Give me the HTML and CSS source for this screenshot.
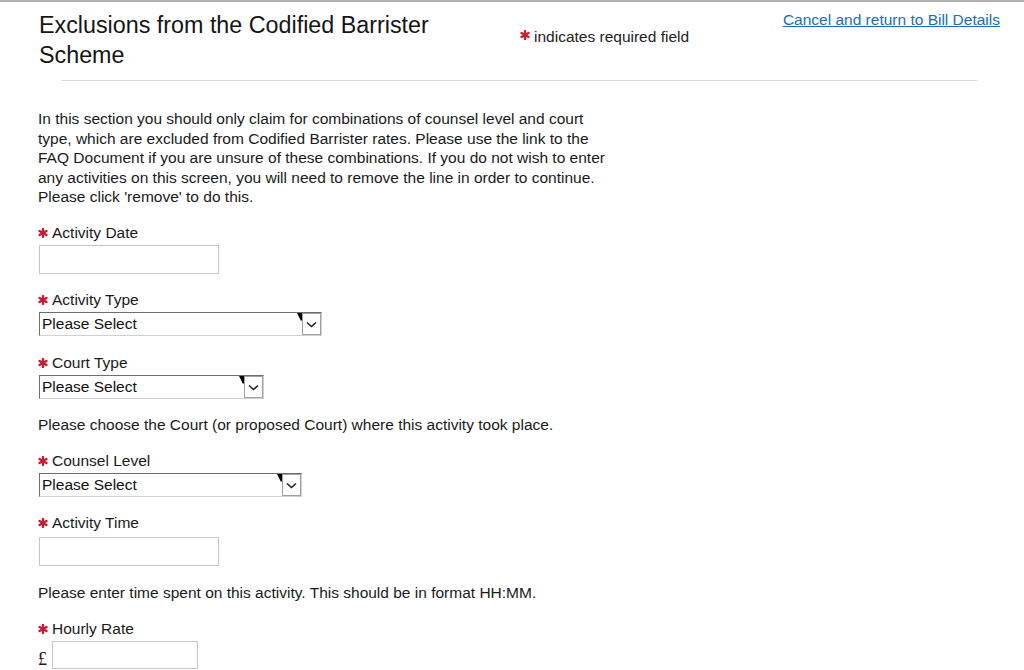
FILE: index.html
```html
<!DOCTYPE html>
<html>
  <head>
    <title>Exclusions from the Codified Barrister Scheme</title>
    <link rel="stylesheet" href="styles.css">
  </head>
  <body>
    <!-- shared icons -->
    <svg class="icon-defs" aria-hidden="true">
      <symbol id="star" viewBox="0 0 10 10">
        <g stroke="currentColor" stroke-width="2.4" stroke-linecap="round">
          <line x1="5" y1="1" x2="5" y2="9"/>
          <line x1="1.5" y1="3" x2="8.5" y2="7"/>
          <line x1="1.5" y1="7" x2="8.5" y2="3"/>
        </g>
      </symbol>
      <symbol id="drop" viewBox="0 0 24 22">
        <polygon points="0,0 5,0 5,7 4,8" fill="#000"/>
        <rect x="5.5" y="0.5" width="18" height="21" fill="#fff" stroke="#a0a0a0"/>
        <polyline points="10,9.5 14.5,13.5 19,9.5" fill="none" stroke="#222" stroke-width="1.6"/>
      </symbol>
    </svg>

    <div class="page">
      <!-- header -->
      <header class="page-head">
        <h1 class="page-title">Exclusions from the Codified Barrister Scheme</h1>
        <p class="req-note"><svg class="req"><use href="#star"/></svg>indicates required field</p>
        <a class="cancel-link" href="#">Cancel and return to Bill Details</a>
      </header>
      <div class="divider"></div>

      <main class="form-body">
        <p class="intro">In this section you should only claim for combinations of counsel level and court type, which are excluded from Codified Barrister rates. Please use the link to the FAQ Document if you are unsure of these combinations. If you do not wish to enter any activities on this screen, you will need to remove the line in order to continue. Please click 'remove' to do this.</p>

        <form class="claim-form">
          <div class="field">
            <label class="field-label"><svg class="req"><use href="#star"/></svg>Activity Date</label>
            <input class="text-input" type="text">
          </div>

          <div class="field">
            <label class="field-label"><svg class="req"><use href="#star"/></svg>Activity Type</label>
            <div class="select-box select-wide">
              <select class="select-input"><option>Please Select</option></select>
              <svg class="select-btn"><use href="#drop"/></svg>
            </div>
          </div>

          <div class="field">
            <label class="field-label"><svg class="req"><use href="#star"/></svg>Court Type</label>
            <div class="select-box select-narrow">
              <select class="select-input"><option>Please Select</option></select>
              <svg class="select-btn"><use href="#drop"/></svg>
            </div>
          </div>

          <p class="help">Please choose the Court (or proposed Court) where this activity took place.</p>

          <div class="field">
            <label class="field-label"><svg class="req"><use href="#star"/></svg>Counsel Level</label>
            <div class="select-box select-mid">
              <select class="select-input"><option>Please Select</option></select>
              <svg class="select-btn"><use href="#drop"/></svg>
            </div>
          </div>

          <div class="field">
            <label class="field-label"><svg class="req"><use href="#star"/></svg>Activity Time</label>
            <input class="text-input time-input" type="text">
          </div>

          <p class="help">Please enter time spent on this activity. This should be in format HH:MM.</p>

          <div class="field">
            <label class="field-label"><svg class="req"><use href="#star"/></svg>Hourly Rate</label>
            <div class="money">
              <span class="currency">£</span>
              <input class="text-input rate-input" type="text">
            </div>
          </div>
        </form>
      </main>
    </div>
  </body>
</html>
```

FILE: styles.css
```css
/* page basics */
body {
  margin: 0;
  font-family: "Liberation Sans", Arial, sans-serif;
  font-size: 15.5px;
  color: #1a1a1a;
  background: #fff;
}

.icon-defs {
  display: none;
}

.page {
  border-top: 2px solid #b0b0b0;
}

/* header */
.page-head {
  display: flex;
  align-items: flex-start;
  padding: 8px 24px 0 39px;
}

.page-title {
  width: 430px;
  margin: 0;
  font-size: 23.3px;
  font-weight: normal;
  line-height: 30px;
  color: #151515;
}

.req-note {
  margin: 18px 0 0 51px;
  line-height: 18px;
  color: #222;
}

.cancel-link {
  margin: 1px 0 0 auto;
  line-height: 18px;
  color: #1b6dba;
}

.req {
  width: 10px;
  height: 10px;
  margin-right: 5px;
  color: #c61d32;
}

.req-note .req {
  margin-right: 4px;
  vertical-align: 2px;
}

.divider {
  margin: 10px 47px 0 61px;
  border-top: 1px solid #d6dada;
}

/* form area */
.form-body {
  padding: 28px 0 0 38px;
}

.intro {
  width: 576px;
  margin: 0 0 17px;
  line-height: 19.5px;
}

.claim-form {
  display: flex;
  flex-direction: column;
  align-items: flex-start;
  gap: 17.6px;
}

.field {
  display: flex;
  flex-direction: column;
  align-items: flex-start;
}

.field-label {
  display: flex;
  align-items: center;
  line-height: 18px;
  margin-bottom: 3px;
}

.field-label .req {
  margin-right: 4px;
}

.help {
  margin: 0;
  line-height: 18px;
}

.text-input {
  box-sizing: border-box;
  width: 180px;
  height: 29px;
  margin-left: 1px;
  border: 1px solid #c6c6c6;
  font: inherit;
}

.time-input {
  margin-top: 2px;
}

/* old style drop down */
.select-box {
  box-sizing: border-box;
  display: flex;
  height: 24px;
  margin-left: 1px;
  border-top: 1px solid #6e6e6e;
  border-left: 1px solid #6e6e6e;
  border-right: 1px solid #d0d0d0;
  border-bottom: 1px solid #d0d0d0;
  background: #fff;
}

.select-wide {
  width: 283px;
}

.select-narrow {
  width: 225px;
}

.select-mid {
  width: 263px;
}

.select-input {
  flex: 1;
  min-width: 0;
  -webkit-appearance: none;
  appearance: none;
  border: none;
  background: transparent;
  padding: 0 0 0 2px;
  font: inherit;
  color: #111;
  line-height: 22px;
}

.select-btn {
  width: 24px;
  height: 22px;
}

.money {
  display: flex;
  align-items: center;
}

.currency {
  width: 13px;
  font-family: "Liberation Serif", "Times New Roman", serif;
  font-size: 18px;
  padding-top: 8px;
}

.rate-input {
  width: 146px;
  height: 28px;
}
```
